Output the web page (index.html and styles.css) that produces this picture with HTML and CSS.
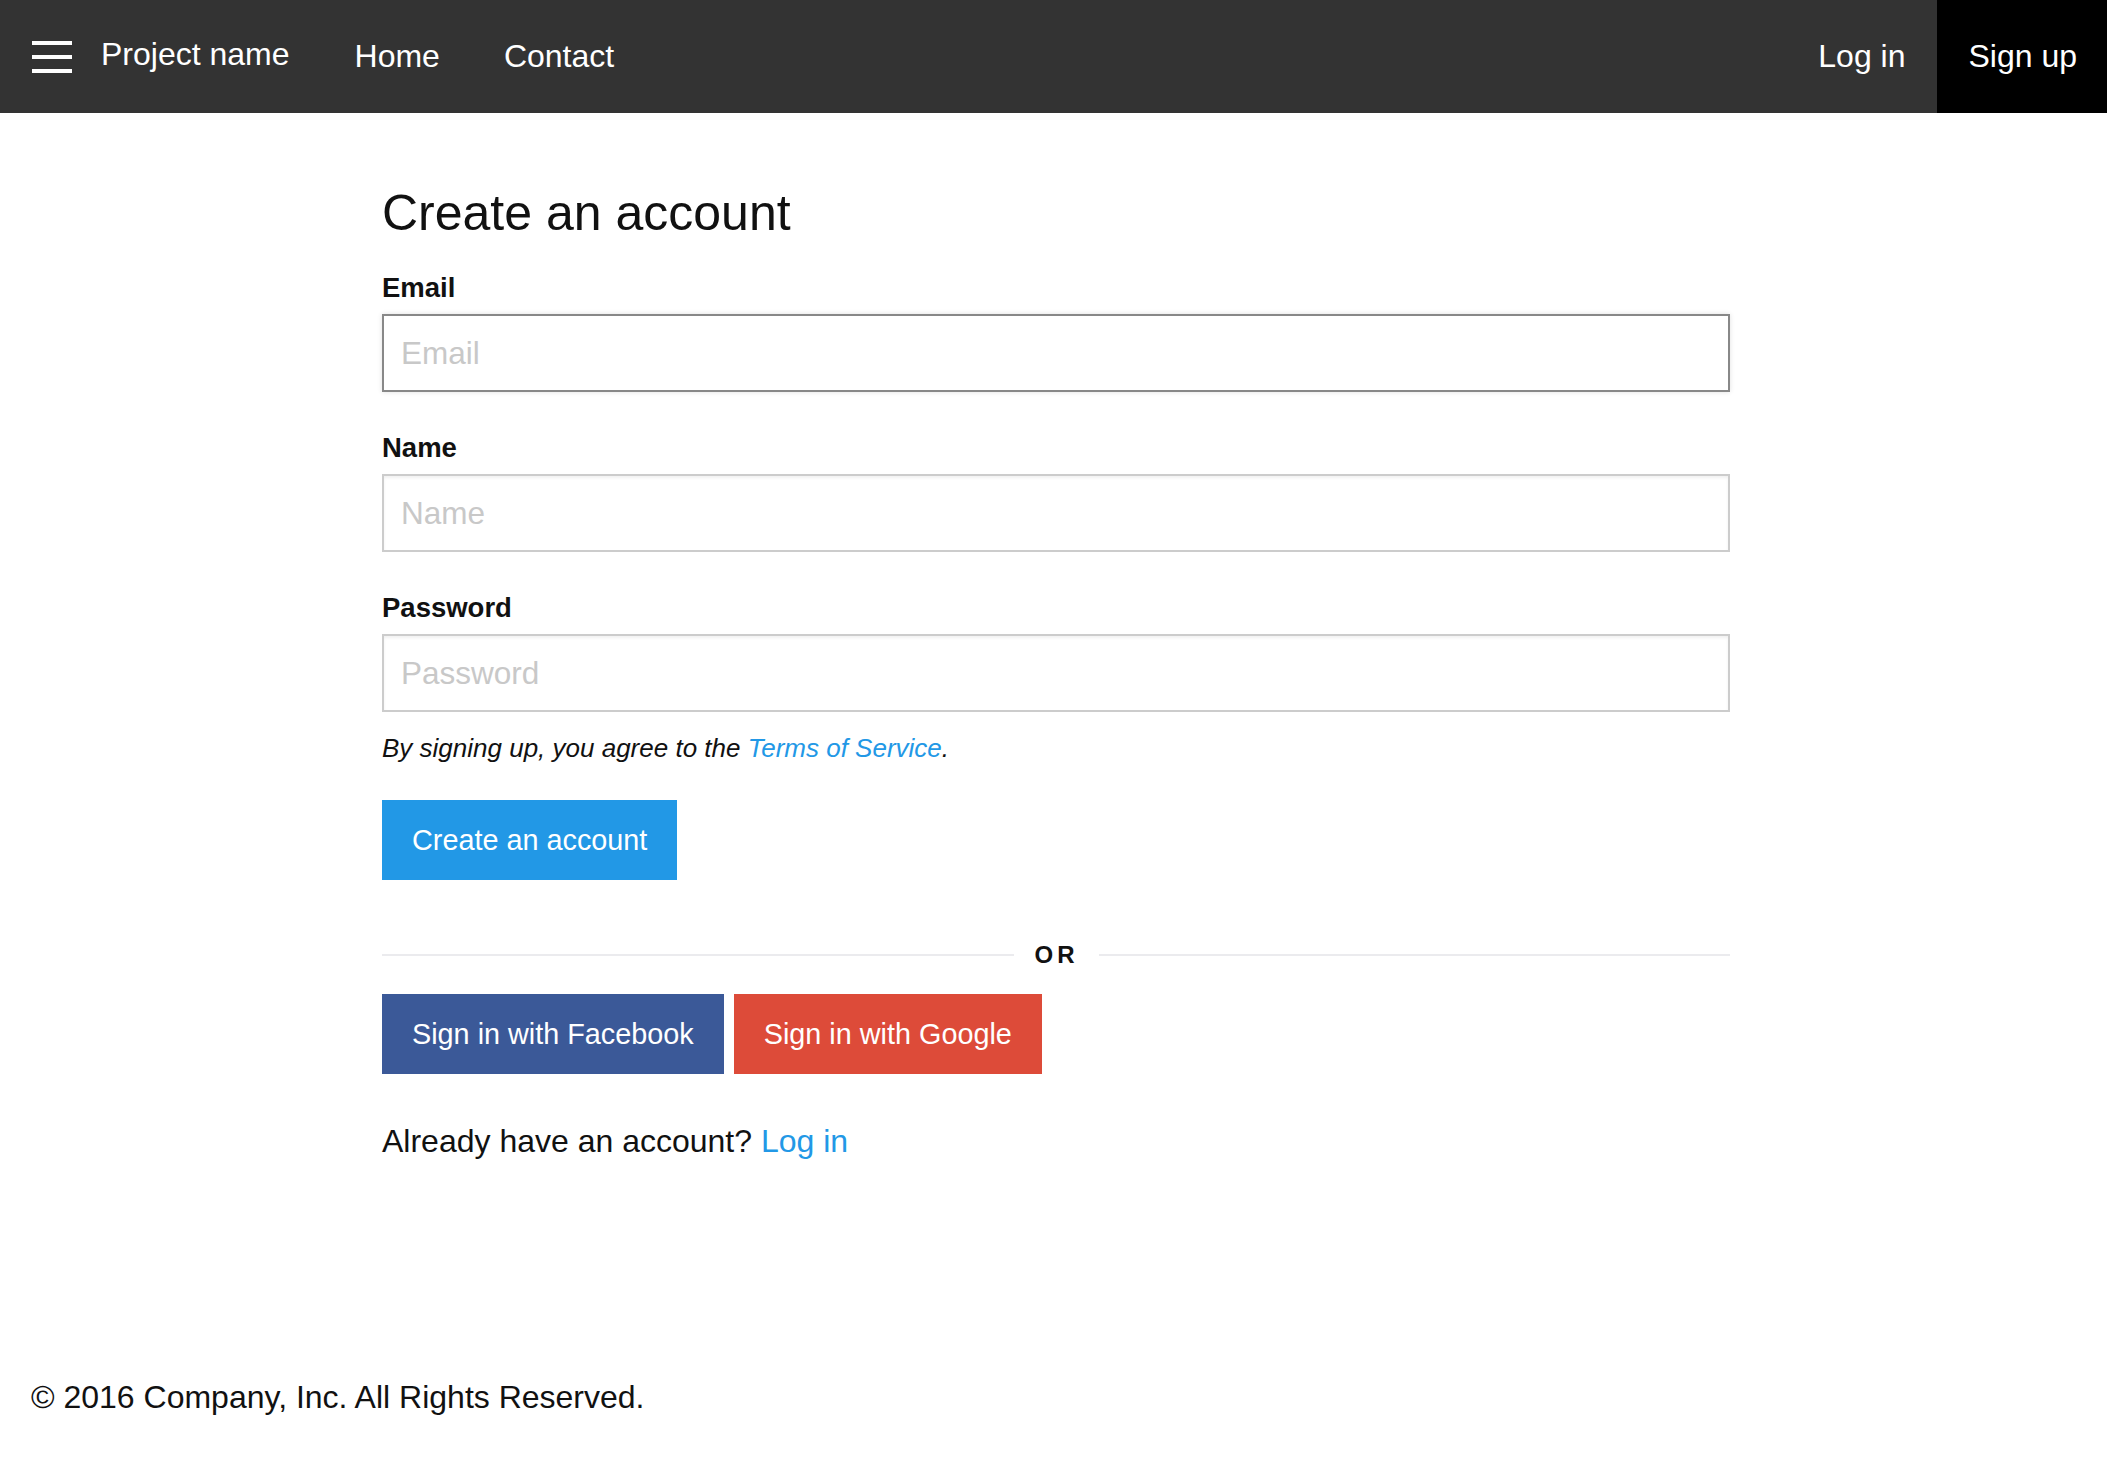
FILE: index.html
```html
<!DOCTYPE html>
<html lang="en">
<head>
<meta charset="utf-8">
<title>Create an account</title>
<link rel="stylesheet" href="styles.css">
</head>
<body>
<div class="page">
  <header class="topbar">
    <div class="burger" aria-label="Menu"><span></span><span></span><span></span></div>
    <a class="brand" href="#">Project name</a>
    <nav class="nav-left">
      <a class="nav-link" href="#">Home</a>
      <a class="nav-link" href="#">Contact</a>
    </nav>
    <nav class="nav-right">
      <a class="nav-link" href="#">Log in</a>
      <a class="nav-link nav-signup" href="#">Sign up</a>
    </nav>
  </header>

  <main class="main">
    <h1 class="title">Create an account</h1>
    <form class="form">
      <div class="field">
        <label class="label" for="email">Email</label>
        <input class="input" id="email" type="email" placeholder="Email" autofocus>
      </div>
      <div class="field">
        <label class="label" for="name">Name</label>
        <input class="input" id="name" type="text" placeholder="Name">
      </div>
      <div class="field">
        <label class="label" for="password">Password</label>
        <input class="input" id="password" type="password" placeholder="Password">
      </div>
      <p class="terms">By signing up, you agree to the <a class="link" href="#">Terms of Service</a>.</p>
      <div class="actions">
        <button class="btn btn-primary" type="button">Create an account</button>
      </div>
    </form>

    <div class="divider"><span class="divider-line"></span><span class="divider-text">OR</span><span class="divider-line"></span></div>

    <div class="social">
      <button class="btn btn-facebook" type="button">Sign in with Facebook</button>
      <button class="btn btn-google" type="button">Sign in with Google</button>
    </div>

    <p class="already">Already have an account? <a class="link" href="#">Log in</a></p>
  </main>

  <footer class="footer">© 2016 Company, Inc. All Rights Reserved.</footer>
</div>
</body>
</html>
```

FILE: styles.css
```css
* { box-sizing: border-box; }

html, body {
  margin: 0;
  padding: 0;
  background: #fff;
}

body {
  font-family: "Liberation Sans", Arial, sans-serif;
  color: #111;
}

.page {
  min-height: 100vh;
  display: flex;
  flex-direction: column;
}

/* ---------- top bar ---------- */
.topbar {
  height: 113px;
  background: #333;
  display: flex;
  align-items: stretch;
  color: #fff;
}

.burger {
  margin-left: 32px;
  width: 40px;
  display: flex;
  flex-direction: column;
  justify-content: center;
  gap: 10px;
}

.burger span {
  display: block;
  height: 4px;
  background: #fff;
}

.brand {
  margin-left: 29px;
  margin-right: 33px;
  display: flex;
  align-items: center;
  padding-bottom: 5px;
  font-size: 32px;
  color: #fff;
  text-decoration: none;
}

.nav-left, .nav-right {
  display: flex;
  align-items: stretch;
}

.nav-right { margin-left: auto; }

.nav-link {
  display: flex;
  align-items: center;
  padding: 0 32px;
  font-size: 32px;
  color: #fff;
  text-decoration: none;
}

.nav-signup {
  background: #000;
  padding: 0 30px 0 31px;
}

/* ---------- main ---------- */
.main {
  width: 1353px;
  padding-left: 5px;
  margin: 0 auto;
}

.title {
  margin: 71px 0 0;
  font-size: 50px;
  line-height: 59px;
  font-weight: normal;
  color: #111;
}

.form { margin-top: 29px; }

.field + .field { margin-top: 40px; }

.label {
  display: block;
  font-size: 27.5px;
  line-height: 32px;
  font-weight: bold;
  margin-bottom: 10px;
  color: #111;
}

.input {
  display: block;
  width: 100%;
  height: 78px;
  padding: 0 17px;
  border: 2px solid #cccccc;
  border-radius: 0;
  box-shadow: inset 0 2px 3px rgba(0, 0, 0, 0.06);
  font-family: "Liberation Sans", Arial, sans-serif;
  font-size: 31.5px;
  color: #111;
  background: #fff;
  outline: none;
}

.input::placeholder { color: #c8c8c8; }

.input:focus {
  border-color: #888;
  box-shadow: 0 0 5px rgba(0, 0, 0, 0.12);
}

.terms {
  margin: 21px 0 0;
  font-size: 26px;
  line-height: 31px;
  font-style: italic;
  color: #111;
}

.link {
  color: #2298e6;
  text-decoration: none;
}

.actions { margin-top: 36px; }

.btn {
  display: inline-block;
  border: 0;
  border-radius: 0;
  margin: 0;
  padding: 23px 30px;
  font-family: "Liberation Sans", Arial, sans-serif;
  font-size: 28.8px;
  line-height: 34px;
  color: #fff;
  cursor: pointer;
}

.btn-primary { background: #2298e6; }
.btn-facebook { background: #3b5998; }
.btn-google { background: #dd4b39; }

.divider {
  margin-top: 60px;
  height: 29px;
  display: flex;
  align-items: center;
}

.divider-line {
  flex: 1;
  height: 2px;
  background: #ebebee;
}

.divider-text {
  padding: 0 20px 0 21px;
  font-size: 24px;
  line-height: 29px;
  font-weight: bold;
  letter-spacing: 4px;
  color: #111;
}

.social {
  margin-top: 25px;
  display: flex;
  gap: 10px;
}

.already {
  margin: 48px 0 0;
  font-size: 32px;
  line-height: 38px;
  color: #111;
}

/* ---------- footer ---------- */
.footer {
  margin-top: auto;
  padding: 0 31px 58px;
  font-size: 32px;
  line-height: 38px;
  color: #111;
}
```
